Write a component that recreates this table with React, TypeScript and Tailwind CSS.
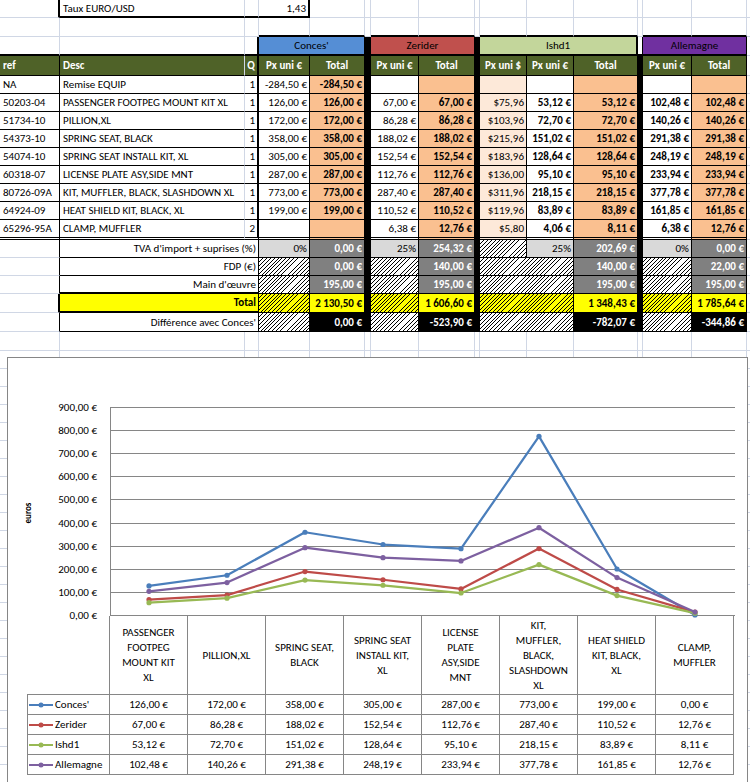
import type { ReactNode } from 'react';
import { twMerge } from 'tailwind-merge';

// column widths of the sheet, A..P
const W = {
  A: 'w-[60px]', B: 'w-[185px]', C: 'w-[14px]', D: 'w-[51px]', E: 'w-[55px]', F: 'w-[6px]',
  G: 'w-[48px]', H: 'w-[56px]', I: 'w-[5px]', J: 'w-[47px]', K: 'w-[47px]', L: 'w-[64px]',
  M: 'w-[5px]', N: 'w-[49px]', O: 'w-[55px]', P: 'w-[3px]',
  BC: 'w-[199px]', DE: 'w-[106px]', GH: 'w-[104px]', JK: 'w-[94px]', JKL: 'w-[158px]', NO: 'w-[104px]',
};

const HATCH = 'bg-white bg-[repeating-linear-gradient(135deg,#000_0px,#000_0.7px,transparent_0.7px,transparent_2.7px)]';
const HATCH_Y = 'bg-[#ffff00] bg-[repeating-linear-gradient(135deg,#000_0px,#000_0.7px,transparent_0.7px,transparent_2.7px)]';
const SEP = 'bg-black border-r-black border-b-black';

function Cell({ w, className, children }: { w: string; className?: string; children?: ReactNode }) {
  return (
    <div
      className={twMerge(
        'shrink-0 h-full flex items-center whitespace-nowrap px-[2px] border-r border-b border-r-[#d0d7e5] border-b-[#d0d7e5]',
        w,
        className
      )}
    >
      {children}
    </div>
  );
}

function BlankRow({ h }: { h: string }) {
  const cols = [W.A, W.B, W.C, W.D, W.E, W.F, W.G, W.H, W.I, W.J, W.K, W.L, W.M, W.N, W.O, W.P];
  return (
    <div className={twMerge('flex', h)}>
      {cols.map((c, i) => (
        <Cell key={i} w={c} />
      ))}
    </div>
  );
}

const items = [
  { ref: 'NA', desc: 'Remise EQUIP', q: '1', d: '-284,50 €', e: '-284,50 €', g: '', h: '', j: '', k: '', l: '', n: '', o: '' },
  { ref: '50203-04', desc: 'PASSENGER FOOTPEG MOUNT KIT XL', q: '1', d: '126,00 €', e: '126,00 €', g: '67,00 €', h: '67,00 €', j: '$75,96', k: '53,12 €', l: '53,12 €', n: '102,48 €', o: '102,48 €' },
  { ref: '51734-10', desc: 'PILLION,XL', q: '1', d: '172,00 €', e: '172,00 €', g: '86,28 €', h: '86,28 €', j: '$103,96', k: '72,70 €', l: '72,70 €', n: '140,26 €', o: '140,26 €' },
  { ref: '54373-10', desc: 'SPRING SEAT, BLACK', q: '1', d: '358,00 €', e: '358,00 €', g: '188,02 €', h: '188,02 €', j: '$215,96', k: '151,02 €', l: '151,02 €', n: '291,38 €', o: '291,38 €' },
  { ref: '54074-10', desc: 'SPRING SEAT INSTALL KIT, XL', q: '1', d: '305,00 €', e: '305,00 €', g: '152,54 €', h: '152,54 €', j: '$183,96', k: '128,64 €', l: '128,64 €', n: '248,19 €', o: '248,19 €' },
  { ref: '60318-07', desc: 'LICENSE PLATE ASY,SIDE MNT', q: '1', d: '287,00 €', e: '287,00 €', g: '112,76 €', h: '112,76 €', j: '$136,00', k: '95,10 €', l: '95,10 €', n: '233,94 €', o: '233,94 €' },
  { ref: '80726-09A', desc: 'KIT, MUFFLER, BLACK, SLASHDOWN XL', q: '1', d: '773,00 €', e: '773,00 €', g: '287,40 €', h: '287,40 €', j: '$311,96', k: '218,15 €', l: '218,15 €', n: '377,78 €', o: '377,78 €' },
  { ref: '64924-09', desc: 'HEAT SHIELD KIT, BLACK, XL', q: '1', d: '199,00 €', e: '199,00 €', g: '110,52 €', h: '110,52 €', j: '$119,96', k: '83,89 €', l: '83,89 €', n: '161,85 €', o: '161,85 €' },
  { ref: '65296-95A', desc: 'CLAMP, MUFFLER', q: '2', d: '', e: '', g: '6,38 €', h: '12,76 €', j: '$5,80', k: '4,06 €', l: '8,11 €', n: '6,38 €', o: '12,76 €' },
];

const cats = [
  ['PASSENGER', 'FOOTPEG', 'MOUNT KIT', 'XL'],
  ['PILLION,XL'],
  ['SPRING SEAT,', 'BLACK'],
  ['SPRING SEAT', 'INSTALL KIT,', 'XL'],
  ['LICENSE', 'PLATE', 'ASY,SIDE', 'MNT'],
  ['KIT,', 'MUFFLER,', 'BLACK,', 'SLASHDOWN', 'XL'],
  ['HEAT SHIELD', 'KIT, BLACK,', 'XL'],
  ['CLAMP,', 'MUFFLER'],
];

const series = [
  { name: "Conces'", color: '#4a7ebb', v: [126, 172, 358, 305, 287, 773, 199, 0], t: ['126,00 €', '172,00 €', '358,00 €', '305,00 €', '287,00 €', '773,00 €', '199,00 €', '0,00 €'] },
  { name: 'Zerider', color: '#be4b48', v: [67, 86.28, 188.02, 152.54, 112.76, 287.4, 110.52, 12.76], t: ['67,00 €', '86,28 €', '188,02 €', '152,54 €', '112,76 €', '287,40 €', '110,52 €', '12,76 €'] },
  { name: 'Ishd1', color: '#98b954', v: [53.12, 72.7, 151.02, 128.64, 95.1, 218.15, 83.89, 8.11], t: ['53,12 €', '72,70 €', '151,02 €', '128,64 €', '95,10 €', '218,15 €', '83,89 €', '8,11 €'] },
  { name: 'Allemagne', color: '#7d60a0', v: [102.48, 140.26, 291.38, 248.19, 233.94, 377.78, 161.85, 12.76], t: ['102,48 €', '140,26 €', '291,38 €', '248,19 €', '233,94 €', '377,78 €', '161,85 €', '12,76 €'] },
];

const yOf = (v: number) => 257 - (v * 208) / 900;
const xOf = (i: number) => 141 + 78 * i;

function Chart() {
  const ticks = [0, 100, 200, 300, 400, 500, 600, 700, 800, 900];
  return (
    <div className="absolute left-[7px] top-[25px] w-[741px] h-[440px] border border-[#868686] bg-white">
      <svg width="732" height="258" className="block overflow-visible">
        {ticks.map((t) => (
          <g key={t}>
            <line x1="102" x2="727" y1={Math.round(yOf(t)) + 0.5} y2={Math.round(yOf(t)) + 0.5} stroke="#868686" strokeWidth="1" />
            <text x="89" y={Math.round(yOf(t)) + 4} textAnchor="end" fontSize="11" fill="#000">
              {t},00 €
            </text>
          </g>
        ))}
        <line x1="102.5" x2="102.5" y1="49" y2="258" stroke="#868686" strokeWidth="1" />
        <text x="23" y="155" fontSize="9" fontWeight="bold" textAnchor="middle" transform="rotate(-90 23 155)">
          euros
        </text>
        {series.map((s) => (
          <g key={s.name}>
            <polyline
              points={s.v.map((v, i) => `${xOf(i)},${yOf(v)}`).join(' ')}
              fill="none"
              stroke={s.color}
              strokeWidth="2.25"
              strokeLinejoin="round"
            />
            {s.v.map((v, i) => (
              <circle key={i} cx={xOf(i)} cy={yOf(v)} r="2.6" fill={s.color} />
            ))}
          </g>
        ))}
      </svg>

      {/* data table under the plot */}
      <div className="ml-[19px] flex flex-col">
        <div className="flex h-[79px]">
          <div className="w-[83px] shrink-0 border-r border-b border-[#868686]" />
          {cats.map((c, i) => (
            <div key={i} className="w-[78px] shrink-0 border-r border-b border-[#868686] flex flex-col items-center justify-center text-center leading-[15px]">
              {c.map((l) => (
                <span key={l}>{l}</span>
              ))}
            </div>
          ))}
        </div>
        {series.map((s) => (
          <div key={s.name} className="flex h-[20px]">
            <div className="w-[83px] shrink-0 border-l border-r border-b border-[#868686] flex items-center gap-[1px]">
              <svg width="26" height="8" className="shrink-0">
                <line x1="1" y1="4" x2="25" y2="4" stroke={s.color} strokeWidth="2" />
                <circle cx="13" cy="4" r="2.5" fill={s.color} />
              </svg>
              <span>{s.name}</span>
            </div>
            {s.t.map((t, i) => (
              <div key={i} className="w-[78px] shrink-0 border-r border-b border-[#868686] flex items-center justify-center">
                {t}
              </div>
            ))}
          </div>
        ))}
      </div>
    </div>
  );
}

export default function App() {
  return (
    <div className="h-[782px] w-[750px] overflow-hidden bg-white text-[11px] leading-none text-black font-['Carlito','Lato','Liberation_Sans',sans-serif]">
      {/* row 1 : exchange rate */}
      <div className="flex h-[18px]">
        <Cell w={W.A} className="border-r-2 border-r-black" />
        <Cell w={W.B} className="border-b-2 border-b-black pl-[3px]">Taux EURO/USD</Cell>
        <Cell w={W.C} className="border-b-2 border-b-black" />
        <Cell w={W.D} className="border-b-2 border-b-black border-r-2 border-r-black justify-end">1,43</Cell>
        <Cell w={W.E} /><Cell w={W.F} /><Cell w={W.G} /><Cell w={W.H} /><Cell w={W.I} /><Cell w={W.J} />
        <Cell w={W.K} /><Cell w={W.L} /><Cell w={W.M} /><Cell w={W.N} /><Cell w={W.O} /><Cell w={W.P} />
      </div>

      {/* row 2 */}
      <div className="flex h-[19px]">
        <Cell w={W.A} /><Cell w={W.B} /><Cell w={W.C} />
        <Cell w={W.D} className="border-b-2 border-b-black" />
        <Cell w={W.E} className="border-b-2 border-b-black" />
        <Cell w={W.F} />
        <Cell w={W.G} className="border-b-2 border-b-black" />
        <Cell w={W.H} className="border-b-2 border-b-black" />
        <Cell w={W.I} />
        <Cell w={W.J} className="border-b-2 border-b-black" />
        <Cell w={W.K} className="border-b-2 border-b-black" />
        <Cell w={W.L} className="border-b-2 border-b-black" />
        <Cell w={W.M} />
        <Cell w={W.N} className="border-b-2 border-b-black" />
        <Cell w={W.O} className="border-b-2 border-b-black" />
        <Cell w={W.P} />
      </div>

      {/* row 3 : supplier headers */}
      <div className="flex h-[19px]">
        <Cell w={W.A} className="border-b-2 border-b-black" />
        <Cell w={W.B} className="border-b-2 border-b-black" />
        <Cell w={W.C} className="border-b-2 border-b-black border-r-2 border-r-black" />
        <Cell w={W.DE} className="bg-[#558ed5] justify-center border-b-2 border-b-black border-r-black">Conces'</Cell>
        <Cell w={W.F} className={SEP} />
        <Cell w={W.GH} className="bg-[#c0504d] justify-center border-b-2 border-b-black border-r-black">Zerider</Cell>
        <Cell w={W.I} className={SEP} />
        <Cell w={W.JKL} className="bg-[#c3d69b] justify-center border-b-2 border-b-black border-r-2 border-r-black">Ishd1</Cell>
        <Cell w={W.M} className="border-b-2 border-b-black border-r-black" />
        <Cell w={W.NO} className="bg-[#7030a0] justify-center border-b-2 border-b-black border-r-black">Allemagne</Cell>
        <Cell w={W.P} />
      </div>

      {/* row 4 : column headers */}
      <div className="flex h-[20px] font-bold text-white">
        <Cell w={W.A} className="bg-[#4f6228] border-r-black border-b-black pl-[3px]">ref</Cell>
        <Cell w={W.B} className="bg-[#4f6228] border-b-black pl-[3px]">Desc</Cell>
        <Cell w={W.C} className="bg-[#4f6228] border-b-black border-r-2 border-r-black justify-center">Q</Cell>
        <Cell w={W.D} className="bg-[#4f6228] border-b-black border-r-black justify-center">Px uni €</Cell>
        <Cell w={W.E} className="bg-[#4f6228] border-b-black border-r-black justify-center">Total</Cell>
        <Cell w={W.F} className={SEP} />
        <Cell w={W.G} className="bg-[#4f6228] border-b-black border-r-black justify-center">Px uni €</Cell>
        <Cell w={W.H} className="bg-[#4f6228] border-b-black border-r-black justify-center">Total</Cell>
        <Cell w={W.I} className={SEP} />
        <Cell w={W.J} className="bg-[#4f6228] border-b-black border-r-black justify-center">Px uni $</Cell>
        <Cell w={W.K} className="bg-[#4f6228] border-b-black border-r-black justify-center">Px uni €</Cell>
        <Cell w={W.L} className="bg-[#4f6228] border-b-black border-r-black justify-center">Total</Cell>
        <Cell w={W.M} className={SEP} />
        <Cell w={W.N} className="bg-[#4f6228] border-b-black border-r-black justify-center">Px uni €</Cell>
        <Cell w={W.O} className="bg-[#4f6228] border-b-black border-r-black justify-center">Total</Cell>
        <Cell w={W.P} />
      </div>

      {/* parts */}
      {items.map((it, idx) => {
        const last = idx === items.length - 1;
        const rb = last ? 'border-b-[3px] border-double border-b-black' : 'border-b-black';
        return (
          <div key={it.ref} className={last ? 'flex h-[20px]' : 'flex h-[18px]'}>
            <Cell w={W.A} className={twMerge('border-r-black pl-[3px]', rb)}>{it.ref}</Cell>
            <Cell w={W.B} className={twMerge('pl-[3px]', rb)}>{it.desc}</Cell>
            <Cell w={W.C} className={twMerge('border-r-2 border-r-black justify-end', rb)}>{it.q}</Cell>
            <Cell w={W.D} className={twMerge('border-r-black justify-end', rb)}>{it.d}</Cell>
            <Cell w={W.E} className={twMerge('bg-[#fac090] font-bold border-r-black justify-end', rb)}>{it.e}</Cell>
            <Cell w={W.F} className={SEP} />
            <Cell w={W.G} className={twMerge('border-r-black justify-end', rb)}>{it.g}</Cell>
            <Cell w={W.H} className={twMerge('bg-[#fac090] font-bold border-r-black justify-end', rb)}>{it.h}</Cell>
            <Cell w={W.I} className={SEP} />
            <Cell w={W.J} className={twMerge('bg-[#fde9d9] border-r-black justify-end', rb)}>{it.j}</Cell>
            <Cell w={W.K} className={twMerge('font-bold border-r-black justify-end', rb)}>{it.k}</Cell>
            <Cell w={W.L} className={twMerge('bg-[#fac090] font-bold border-r-black justify-end', rb)}>{it.l}</Cell>
            <Cell w={W.M} className={SEP} />
            <Cell w={W.N} className={twMerge('font-bold border-r-black justify-end', rb)}>{it.n}</Cell>
            <Cell w={W.O} className={twMerge('bg-[#fac090] font-bold border-r-black justify-end', rb)}>{it.o}</Cell>
            <Cell w={W.P} />
          </div>
        );
      })}

      {/* TVA */}
      <div className="flex h-[18px]">
        <Cell w={W.A} className="border-r-black" />
        <Cell w={W.BC} className="border-b-black border-r-black justify-end">TVA d'import + suprises (%)</Cell>
        <Cell w={W.D} className="bg-[#d9d9d9] border-b-black border-r-black justify-end">0%</Cell>
        <Cell w={W.E} className="bg-[#808080] text-white font-bold border-b-black border-r-black justify-end">0,00 €</Cell>
        <Cell w={W.F} className={SEP} />
        <Cell w={W.G} className="bg-[#d9d9d9] border-b-black border-r-black justify-end">25%</Cell>
        <Cell w={W.H} className="bg-[#808080] text-white font-bold border-b-black border-r-black justify-end">254,32 €</Cell>
        <Cell w={W.I} className={SEP} />
        <Cell w={W.J} className={twMerge(HATCH, 'border-b-black border-r-black')} />
        <Cell w={W.K} className="bg-[#d9d9d9] border-b-black border-r-black justify-end">25%</Cell>
        <Cell w={W.L} className="bg-[#808080] text-white font-bold border-b-black border-r-black justify-end">202,69 €</Cell>
        <Cell w={W.M} className={SEP} />
        <Cell w={W.N} className="bg-[#d9d9d9] border-b-black border-r-black justify-end">0%</Cell>
        <Cell w={W.O} className="bg-[#808080] text-white font-bold border-b-black border-r-black justify-end">0,00 €</Cell>
        <Cell w={W.P} />
      </div>

      {/* FDP */}
      <div className="flex h-[18px]">
        <Cell w={W.A} className="border-r-black" />
        <Cell w={W.BC} className="border-b-black border-r-black justify-end">FDP (€)</Cell>
        <Cell w={W.D} className={twMerge(HATCH, 'border-b-black border-r-black')} />
        <Cell w={W.E} className="bg-[#808080] text-white font-bold border-b-black border-r-black justify-end">0,00 €</Cell>
        <Cell w={W.F} className={SEP} />
        <Cell w={W.G} className={twMerge(HATCH, 'border-b-black border-r-black')} />
        <Cell w={W.H} className="bg-[#808080] text-white font-bold border-b-black border-r-black justify-end">140,00 €</Cell>
        <Cell w={W.I} className={SEP} />
        <Cell w={W.JK} className={twMerge(HATCH, 'border-b-black border-r-black')} />
        <Cell w={W.L} className="bg-[#808080] text-white font-bold border-b-black border-r-black justify-end">140,00 €</Cell>
        <Cell w={W.M} className={SEP} />
        <Cell w={W.N} className={twMerge(HATCH, 'border-b-black border-r-black')} />
        <Cell w={W.O} className="bg-[#808080] text-white font-bold border-b-black border-r-black justify-end">22,00 €</Cell>
        <Cell w={W.P} />
      </div>

      {/* labour */}
      <div className="flex h-[18px]">
        <Cell w={W.A} className="border-r-black" />
        <Cell w={W.BC} className="border-b-2 border-b-black border-r-black justify-end">Main d'œuvre</Cell>
        <Cell w={W.D} className={twMerge(HATCH, 'border-b-black border-r-black')} />
        <Cell w={W.E} className="bg-[#808080] text-white font-bold border-b-black border-r-black justify-end">195,00 €</Cell>
        <Cell w={W.F} className={SEP} />
        <Cell w={W.G} className={twMerge(HATCH, 'border-b-black border-r-black')} />
        <Cell w={W.H} className="bg-[#808080] text-white font-bold border-b-black border-r-black justify-end">195,00 €</Cell>
        <Cell w={W.I} className={SEP} />
        <Cell w={W.JK} className={twMerge(HATCH, 'border-b-black border-r-black')} />
        <Cell w={W.L} className="bg-[#808080] text-white font-bold border-b-black border-r-black justify-end">195,00 €</Cell>
        <Cell w={W.M} className={SEP} />
        <Cell w={W.N} className={twMerge(HATCH, 'border-b-black border-r-black')} />
        <Cell w={W.O} className="bg-[#808080] text-white font-bold border-b-black border-r-black justify-end">195,00 €</Cell>
        <Cell w={W.P} />
      </div>

      {/* total */}
      <div className="flex h-[19px] font-bold">
        <Cell w={W.A} className="border-r-2 border-r-black" />
        <Cell w={W.BC} className="bg-[#ffff00] border-b-2 border-b-black border-r-black justify-end">Total</Cell>
        <Cell w={W.D} className={twMerge(HATCH_Y, 'border-b-black border-r-black')} />
        <Cell w={W.E} className="bg-[#ffff00] border-b-black border-r-black justify-end">2 130,50 €</Cell>
        <Cell w={W.F} className={SEP} />
        <Cell w={W.G} className={twMerge(HATCH_Y, 'border-b-black border-r-black')} />
        <Cell w={W.H} className="bg-[#ffff00] border-b-black border-r-black justify-end">1 606,60 €</Cell>
        <Cell w={W.I} className={SEP} />
        <Cell w={W.JK} className={twMerge(HATCH_Y, 'border-b-black border-r-black')} />
        <Cell w={W.L} className="bg-[#ffff00] border-b-black border-r-black justify-end">1 348,43 €</Cell>
        <Cell w={W.M} className={SEP} />
        <Cell w={W.N} className={twMerge(HATCH_Y, 'border-b-black border-r-black')} />
        <Cell w={W.O} className="bg-[#ffff00] border-b-black border-r-black justify-end">1 785,64 €</Cell>
        <Cell w={W.P} />
      </div>

      {/* difference */}
      <div className="flex h-[19px]">
        <Cell w={W.A} className="border-r-black" />
        <Cell w={W.BC} className="border-b-black border-r-black justify-end">Différence avec Conces'</Cell>
        <Cell w={W.D} className={twMerge(HATCH, 'border-b-black border-r-black')} />
        <Cell w={W.E} className="bg-black text-white font-bold border-b-black border-r-black justify-end">0,00 €</Cell>
        <Cell w={W.F} className={SEP} />
        <Cell w={W.G} className={twMerge(HATCH, 'border-b-black border-r-black')} />
        <Cell w={W.H} className="bg-black text-white font-bold border-b-black border-r-black justify-end">-523,90 €</Cell>
        <Cell w={W.I} className={SEP} />
        <Cell w={W.JK} className={twMerge(HATCH, 'border-b-black border-r-black')} />
        <Cell w={W.L} className="bg-black text-white font-bold border-b-black border-r-black justify-end">-782,07 €</Cell>
        <Cell w={W.M} className={SEP} />
        <Cell w={W.N} className={twMerge(HATCH, 'border-b-black border-r-black')} />
        <Cell w={W.O} className="bg-black text-white font-bold border-b-black border-r-black justify-end">-344,86 €</Cell>
        <Cell w={W.P} />
      </div>

      {/* empty sheet with the chart floating over it */}
      <div className="relative">
        <BlankRow h="h-[19px]" />
        {Array.from({ length: 24 }).map((_, i) => (
          <BlankRow key={i} h="h-[18px]" />
        ))}
        <Chart />
      </div>
    </div>
  );
}
